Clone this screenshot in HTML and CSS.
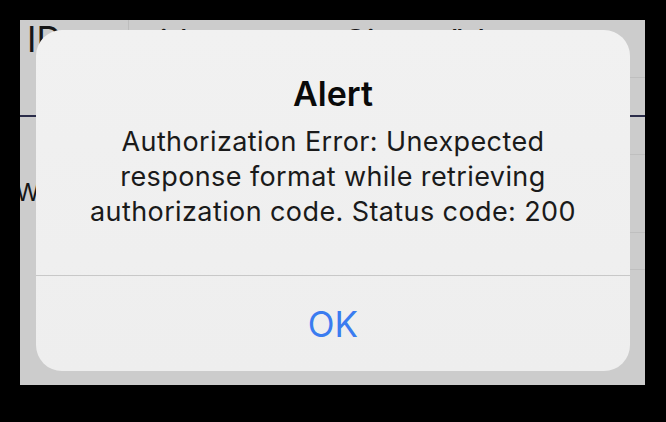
FILE: index.html
```html
<!DOCTYPE html>
<html lang="en">
<head>
<meta charset="utf-8">
<title>Alert</title>
<link rel="stylesheet" href="styles.css">
</head>
<body>
<div class="screen">
  <div class="table">
    <div class="head">
      <div class="cell cell-id">ID</div>
      <div class="cell cell-title">title</div>
      <div class="cell cell-signed">Signed</div>
      <div class="cell cell-kind">tld</div>
    </div>
    <div class="filter"></div>
    <div class="rule"></div>
    <div class="row"></div>
    <div class="row row-tall"><span class="row-text">W</span></div>
    <div class="row"></div>
  </div>
  <div class="alert" role="alertdialog">
    <div class="alert-body">
      <h2 class="alert-title">Alert</h2>
      <p class="alert-msg">Authorization Error: Unexpected response format while retrieving authorization code. Status code: 200</p>
    </div>
    <div class="alert-actions">
      <button class="alert-btn">OK</button>
    </div>
  </div>
</div>
</body>
</html>
```

FILE: styles.css
```css
* { box-sizing: border-box; }
html, body { margin: 0; padding: 0; }
body {
  width: 666px;
  height: 422px;
  background: #000;
  font-family: Inter, "Noto Sans", "Liberation Sans", sans-serif;
  overflow: hidden;
}
.screen {
  position: relative;
  margin: 20px 21px 0 20px;
  height: 365px;
  background: #cccccc;
  overflow: hidden;
}
.table { display: flex; flex-direction: column; }
.head {
  display: flex;
  height: 58px;
  color: #161616;
  font-size: 35px;
  line-height: 1;
  border-bottom: 1px solid #bfbfbf;
  margin-left: 40px;
}
.head .cell { white-space: nowrap; }
.cell-id {
  width: 102px;
  margin-left: -33px;
  padding-top: 2px;
  border-right: 1px solid #bdbdbd;
  height: 10px;
}
.cell-title { margin-left: 19px; width: 196px; padding-top: 5px; }
.cell-signed { width: 100px; padding-top: 5px; }
.cell-kind { width: 60px; padding-top: 5px; }
.filter { height: 37px; }
.rule { height: 2px; background: #2b2d4a; }
.row {
  height: 38px;
  border-bottom: 1px solid #bfbfbf;
  margin-left: 40px;
}
.row-tall {
  height: 77px;
  margin-left: 0;
  border-bottom: none;
  display: flex;
  align-items: center;
  font-size: 24px;
  color: #161616;
  padding-bottom: 2px;
}
.row-text { margin-left: -4px; }
.row-tall + .row { border-top: 1px solid #bfbfbf; margin-left: 40px; }

.alert {
  position: absolute;
  left: 16px;
  top: 10px;
  width: 594px;
  height: 341px;
  background: linear-gradient(180deg, #f1f1f1 0%, #eeeeee 100%);
  border-radius: 26px;
  display: flex;
  flex-direction: column;
  text-align: center;
}
.alert-body {
  padding: 44px 46px 0;
  height: 246px;
  border-bottom: 1px solid #c8c8c8;
}
.alert-title {
  margin: 0;
  font-size: 34px;
  line-height: 40px;
  font-weight: 600;
  color: #0a0a0a;
}
.alert-msg {
  margin: 10px 0 0;
  font-size: 27px;
  line-height: 35px;
  letter-spacing: 0.4px;
  font-weight: 400;
  color: #1a1a1a;
}
.alert-actions {
  flex: 1;
  display: flex;
  align-items: center;
  justify-content: center;
}
.alert-btn {
  background: none;
  border: 0;
  padding: 0;
  font-family: inherit;
  font-size: 35px;
  line-height: 40px;
  color: #3a7cf0;
}
```
